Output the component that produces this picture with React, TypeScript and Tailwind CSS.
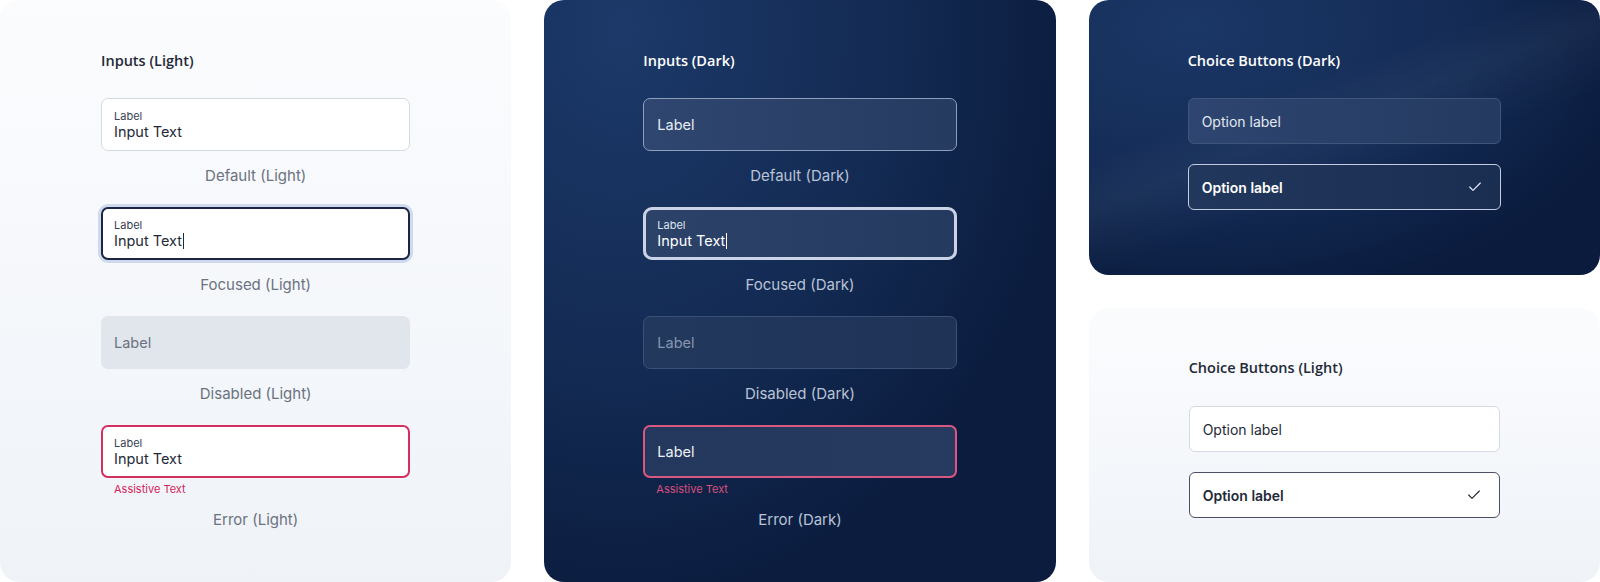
import { Check } from "lucide-react";

const heading = "font-['Open_Sans',sans-serif] text-[14.5px] font-semibold leading-5";
const body = "font-['Inter',sans-serif]";

function Caret({ dark }: { dark?: boolean }) {
  return (
    <span
      className={`ml-px inline-block h-[16px] w-px align-[-3px] ${dark ? "bg-white" : "bg-[#1f2937]"}`}
    />
  );
}

function Caption({ children, dark }: { children: string; dark?: boolean }) {
  return (
    <div
      className={`${body} mt-[15px] text-center text-[15px] leading-5 ${dark ? "text-[#b8c3d6]" : "text-[#6b7280]"}`}
    >
      {children}
    </div>
  );
}

function LightInputs() {
  return (
    <div className="flex h-full flex-col rounded-[20px] bg-gradient-to-b from-[#fbfcfe] to-[#eff3f8] px-[101px] pt-[51px]">
      <h2 className={`${heading} text-[#1f2937]`}>Inputs (Light)</h2>
      <div className={`${body} mt-[27px] flex flex-col gap-[21px]`}>
        {/* Default */}
        <div>
          <div className="h-[53px] rounded-[7px] border border-[#d5dae2] bg-white px-[12px] pt-[10px]">
            <div className="text-[11px] leading-[14px] text-[#374151]">Label</div>
            <div className="text-[14.5px] leading-[18px] text-[#1f2937]">Input Text</div>
          </div>
          <Caption>Default (Light)</Caption>
        </div>
        {/* Focused */}
        <div>
          <div className="h-[53px] rounded-[7px] border-2 border-[#1e2544] bg-white px-[11px] pt-[9px] shadow-[0_0_0_3px_rgba(180,196,228,0.6)]">
            <div className="text-[11px] leading-[14px] text-[#374151]">Label</div>
            <div className="text-[14.5px] leading-[18px] text-[#1f2937]">
              Input Text
              <Caret />
            </div>
          </div>
          <Caption>Focused (Light)</Caption>
        </div>
        {/* Disabled */}
        <div>
          <div className="flex h-[53px] items-center rounded-[7px] bg-[#e1e5ec] px-[13px] text-[14.5px] text-[#6b7280]">
            Label
          </div>
          <Caption>Disabled (Light)</Caption>
        </div>
        {/* Error */}
        <div>
          <div className="h-[53px] rounded-[7px] border-2 border-[#d4305f] bg-white px-[11px] pt-[9px]">
            <div className="text-[11px] leading-[14px] text-[#374151]">Label</div>
            <div className="text-[14.5px] leading-[18px] text-[#1f2937]">Input Text</div>
          </div>
          <div className="mt-[4px] pl-[13px] text-[11px] leading-[14px] text-[#d4255a]">Assistive Text</div>
          <div className={`${body} mt-[14px] text-center text-[15px] leading-5 text-[#6b7280]`}>Error (Light)</div>
        </div>
      </div>
    </div>
  );
}

function DarkInputs() {
  return (
    <div className="flex h-full flex-col rounded-[20px] bg-[radial-gradient(ellipse_at_15%_5%,#1c3969_0%,#142c55_40%,#0b1c3e_75%),linear-gradient(#0b1c3e,#0b1c3e)] px-[99px] pt-[51px]">
      <h2 className={`${heading} text-white`}>Inputs (Dark)</h2>
      <div className={`${body} mt-[27px] flex flex-col gap-[21px]`}>
        <div>
          <div className="flex h-[53px] items-center rounded-[7px] border border-[#8e9fbd] bg-gradient-to-r from-[#2f4670] to-[#263b60] px-[13px] text-[14.5px] text-[#e8edf5]">
            Label
          </div>
          <Caption dark>Default (Dark)</Caption>
        </div>
        <div>
          <div className="h-[53px] rounded-[9px] border-[3px] border-[#cbd4e6] bg-gradient-to-r from-[#2c4269] to-[#243a5f] px-[11px] pt-[8px]">
            <div className="text-[11px] leading-[14px] text-[#dfe5ef]">Label</div>
            <div className="text-[14.5px] leading-[18px] text-white">
              Input Text
              <Caret dark />
            </div>
          </div>
          <Caption dark>Focused (Dark)</Caption>
        </div>
        <div>
          <div className="flex h-[53px] items-center rounded-[7px] border border-[#3b5075] bg-gradient-to-r from-[#22385d] to-[#1f3357] px-[13px] text-[14.5px] text-[#8796b0]">
            Label
          </div>
          <Caption dark>Disabled (Dark)</Caption>
        </div>
        <div>
          <div className="flex h-[53px] items-center rounded-[7px] border-2 border-[#d9587f] bg-gradient-to-r from-[#23385c] to-[#263b5f] px-[12px] text-[14.5px] text-[#eef1f6]">
            Label
          </div>
          <div className="mt-[4px] pl-[13px] text-[11px] leading-[14px] text-[#d9507c]">Assistive Text</div>
          <div className={`${body} mt-[14px] text-center text-[15px] leading-5 text-[#b8c3d6]`}>Error (Dark)</div>
        </div>
      </div>
    </div>
  );
}

function DarkChoices() {
  return (
    <div className="flex-1 rounded-[20px] bg-[linear-gradient(160deg,rgba(255,255,255,0)_35%,rgba(255,255,255,0.04)_45%,rgba(255,255,255,0)_60%),radial-gradient(ellipse_at_20%_10%,#1b3766_0%,#142c56_45%,#0a1b3d_80%)] px-[99px] pt-[51px]">
      <h2 className={`${heading} text-white`}>Choice Buttons (Dark)</h2>
      <div className={`${body} mt-[27px] flex flex-col gap-[20px]`}>
        <div className="flex h-[46px] items-center rounded-[6px] border border-[#3f5579] bg-gradient-to-r from-[#2d4570] to-[#243a60] px-[13px] text-[14px] text-[#e3e8f0]">
          Option label
        </div>
        <div className="flex h-[46px] items-center justify-between rounded-[6px] border border-[#c3cce0] bg-gradient-to-r from-[#22375c] to-[#1a2e52] pl-[13px] pr-[17px] text-[14px] font-semibold text-white">
          Option label
          <Check size={16} strokeWidth={1.75} className="text-[#e6ebf3]" />
        </div>
      </div>
    </div>
  );
}

function LightChoices() {
  return (
    <div className="flex-1 rounded-[20px] bg-gradient-to-b from-[#fbfcfe] to-[#eff3f8] px-[100px] pt-[50px]">
      <h2 className={`${heading} text-[#1f2937]`}>Choice Buttons (Light)</h2>
      <div className={`${body} mt-[28px] flex flex-col gap-[20px]`}>
        <div className="flex h-[46px] items-center rounded-[6px] border border-[#d5dae2] bg-white px-[13px] text-[14px] text-[#1f2937]">
          Option label
        </div>
        <div className="flex h-[46px] items-center justify-between rounded-[6px] border border-[#4b5064] bg-white pl-[13px] pr-[17px] text-[14px] font-semibold text-[#1f2937]">
          Option label
          <Check size={16} strokeWidth={1.75} className="text-[#1f2937]" />
        </div>
      </div>
    </div>
  );
}

export default function App() {
  return (
    <div className="grid h-[582px] w-[1600px] grid-cols-3 gap-[33px] bg-white">
      <LightInputs />
      <DarkInputs />
      <div className="flex flex-col gap-[33px]">
        <DarkChoices />
        <LightChoices />
      </div>
    </div>
  );
}
